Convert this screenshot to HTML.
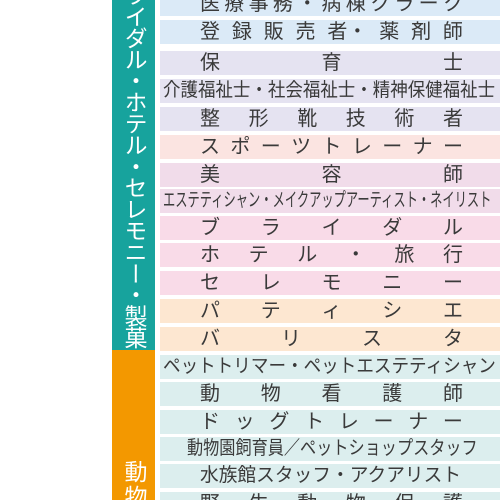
<!DOCTYPE html>
<html><head><meta charset="utf-8"><style>
html,body{margin:0;width:500px;height:500px;overflow:hidden}
body{background:#fff;position:relative;font-family:"Liberation Sans","Noto Sans CJK JP",sans-serif;color:#3a3a3a}
.bar{position:absolute;left:112px;width:43px;overflow:hidden}
.vt{position:absolute;left:0;width:43px;writing-mode:vertical-rl;font-size:23px;line-height:43px;color:#fff;white-space:nowrap}
.r{position:absolute;left:160px;width:340px;height:24px;overflow:hidden}
.s{position:absolute;left:40px;width:263px;top:0;height:24px;display:flex;justify-content:space-between;font-size:20px;line-height:24px}
.l{position:absolute;top:0;font-size:19px;line-height:24px;white-space:nowrap;transform-origin:0 50%}
</style></head><body>
<div class="bar" style="top:0;height:350px;background:#17a39d"><div class="vt" style="top:-38px;height:388px;letter-spacing:-1.6px">ブライダル・ホテル・セレモニー・製菓</div></div>
<div class="bar" style="top:350px;height:150px;background:#f39800"><div class="vt" style="top:110px;height:40px;letter-spacing:2px">動物</div></div>

<div class="r" style="top:-8px;background:#dbeaf7"><div class="s"><span>医</span><span>療</span><span>事</span><span>務</span><span>・</span><span>病</span><span>棟</span><span>ク</span><span>ラ</span><span>ー</span><span>ク</span></div></div>
<div class="r" style="top:20px;background:#dbeaf7"><div class="s"><span>登</span><span>録</span><span>販</span><span>売</span><span>者・</span><span>薬</span><span>剤</span><span>師</span></div></div>
<div class="r" style="top:51px;background:#e5e3f1"><div class="s"><span>保</span><span>育</span><span>士</span></div></div>
<div class="r" style="top:79px;background:#e5e3f1"><div class="l" style="left:3px;transform:scaleX(0.92)">介護福祉士・社会福祉士・精神保健福祉士</div></div>
<div class="r" style="top:107px;background:#e5e3f1"><div class="s"><span>整</span><span>形</span><span>靴</span><span>技</span><span>術</span><span>者</span></div></div>
<div class="r" style="top:135px;background:#fbe4e1"><div class="s"><span>ス</span><span>ポ</span><span>ー</span><span>ツ</span><span>ト</span><span>レ</span><span>ー</span><span>ナ</span><span>ー</span></div></div>
<div class="r" style="top:163px;background:#f1dcea"><div class="s"><span>美</span><span>容</span><span>師</span></div></div>
<div class="r" style="top:189px;background:#f1dcea"><div class="l" style="left:3px;transform:scaleX(0.645)">エステティシャン・メイクアップアーティスト・ネイリスト</div></div>
<div class="r" style="top:216px;background:#f9dbe8"><div class="s"><span>ブ</span><span>ラ</span><span>イ</span><span>ダ</span><span>ル</span></div></div>
<div class="r" style="top:243px;background:#f9dbe8"><div class="s"><span>ホ</span><span>テ</span><span>ル</span><span>・</span><span>旅</span><span>行</span></div></div>
<div class="r" style="top:271px;background:#f9dbe8"><div class="s"><span>セ</span><span>レ</span><span>モ</span><span>ニ</span><span>ー</span></div></div>
<div class="r" style="top:299px;background:#fde7d1"><div class="s"><span>パ</span><span>テ</span><span>ィ</span><span>シ</span><span>エ</span></div></div>
<div class="r" style="top:327px;background:#fde7d1"><div class="s"><span>バ</span><span>リ</span><span>ス</span><span>タ</span></div></div>
<div class="r" style="top:355px;background:#dceeee"><div class="l" style="left:3px;transform:scaleX(0.925)">ペットトリマー・ペットエステティシャン</div></div>
<div class="r" style="top:382px;background:#dceeee"><div class="s"><span>動</span><span>物</span><span>看</span><span>護</span><span>師</span></div></div>
<div class="r" style="top:410px;background:#dceeee"><div class="s"><span>ド</span><span>ッ</span><span>グ</span><span>ト</span><span>レ</span><span>ー</span><span>ナ</span><span>ー</span></div></div>
<div class="r" style="top:437px;background:#dceeee"><div class="l" style="left:27px;transform:scaleX(0.85)">動物園飼育員／ペットショップスタッフ</div></div>
<div class="r" style="top:464px;background:#dceeee"><div class="l" style="left:40px;transform:scaleX(0.985)">水族館スタッフ・アクアリスト</div></div>
<div class="r" style="top:492px;height:8px;background:#dceeee"><div class="s"><span>野</span><span>生</span><span>動</span><span>物</span><span>保</span><span>護</span></div></div>
</body></html>
